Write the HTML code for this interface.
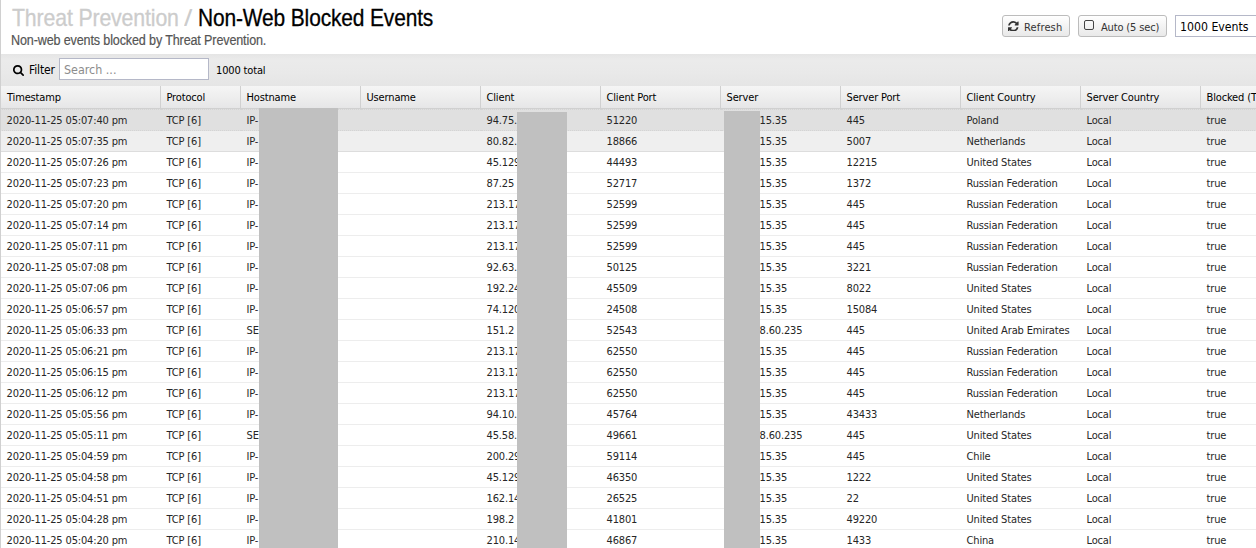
<!DOCTYPE html>
<html><head><meta charset="utf-8"><title>Non-Web Blocked Events</title>
<style>
html,body{margin:0;padding:0;background:#fff;}
body{width:1256px;height:548px;overflow:hidden;position:relative;font-family:"DejaVu Sans Condensed","Liberation Sans",sans-serif;font-size:11px;letter-spacing:-0.15px;color:#000;}
#left{position:absolute;left:0;top:0;width:1px;height:548px;background:#d0d0d0;z-index:5;}
#hdr{position:absolute;left:1px;top:0;width:1255px;height:54px;background:#fff;}
#title span{position:absolute;top:3px;font-family:"Liberation Sans",sans-serif;font-size:24px;line-height:30px;white-space:nowrap;transform-origin:0 0;color:#000;}
#title span{-webkit-text-stroke:0.3px #000;}#title .g{color:#ccc;-webkit-text-stroke:0.3px #ccc;}
#sub{position:absolute;left:10px;top:31px;-webkit-text-stroke:0.2px #555;font-family:"Liberation Sans",sans-serif;font-size:14px;line-height:18px;white-space:nowrap;transform-origin:0 0;transform:scaleX(.898);color:#555;}
.btn{position:absolute;top:15px;height:20px;border:1px solid #bcbcbc;border-radius:3px;background:linear-gradient(#fff,#f3f3f3 50%,#e9e9e9);font-size:11px;line-height:20px;white-space:nowrap;color:#333;box-sizing:content-box;}
#tb{position:absolute;left:1px;top:54px;width:1255px;height:32px;background:linear-gradient(#e5e5e5,#ebebeb 20%,#e9e9e9 60%,#e5e5e5);box-sizing:border-box;}
#tb .ic{position:absolute;left:12px;top:11px;}
#tb .lbl{position:absolute;left:28px;top:9px;font-size:12px;line-height:15px;}
#search{position:absolute;left:58px;top:4px;width:150px;height:22px;box-sizing:border-box;border:1px solid #b5b8c8;background:#fff;font-size:12.4px;letter-spacing:0;line-height:22px;padding-left:4px;color:#8c8c8c;}
#tb .tot{position:absolute;left:215px;top:10px;font-size:11px;line-height:14px;}
table{position:absolute;left:0;top:86px;border-collapse:separate;border-spacing:0;table-layout:fixed;width:1400px;}
th{height:23px;box-sizing:border-box;padding:0 0 0 5.5px;text-align:left;font-weight:normal;font-size:11px;background:linear-gradient(#f5f5f5,#eeeeee 50%,#e6e6e7);border-right:1px solid #d0d0d0;border-bottom:1px solid #d0d0d0;white-space:nowrap;overflow:hidden;}
td{height:21px;box-sizing:border-box;padding:0 0 0 5.5px;font-size:11px;border-bottom:1px solid #ededed;white-space:nowrap;overflow:hidden;color:#262626;}
tr.sel td{height:22px;background:#e0e0e0;border-top:1px dotted #d4d4d4;border-bottom:1px dotted #d4d4d4;}
tr.hov td{background:#efefef;border-bottom:1px solid #ddd;}
td.srv{padding-left:38.5px;}td:first-child{padding-left:6.5px;}
.red{position:absolute;background:#c0c0c0;z-index:3;}
</style></head><body>
<div id="left"></div>
<div id="hdr">
<div id="title"><span class="g" style="left:11px;transform:scaleX(.886)">Threat Prevention</span><span class="g" style="left:182.5px;transform:scaleX(1.25);-webkit-text-stroke:0">/</span><span style="left:197px;transform:scaleX(.872)">Non-Web Blocked Events</span></div>
<div id="sub">Non-web events blocked by Threat Prevention.</div>
<div class="btn" style="left:1001px;width:66px;"><svg width="10.6" height="10.6" viewBox="0 0 1536 1536" style="position:absolute;left:5px;top:4.6px"><path fill="#333" d="M1511 928q0 5-1 7-64 268-268 434.500T764 1536q-146 0-282.500-55T238 1324l-129 129q-19 19-45 19t-45-19-19-45V960q0-26 19-45t45-19h448q26 0 45 19t19 45-19 45l-137 137q71 66 161 102t187 36q134 0 250-65t186-179q11-17 53-117 8-23 30-23h192q13 0 22.500 9.500t9.500 22.500zm25-800v448q0 26-19 45t-45 19h-448q-26 0-45-19t-19-45 19-45l138-138Q969 256 768 256q-134 0-250 65T332 500q-11 17-53 117-8 23-30 23H50q-13 0-22.500-9.500T18 608v-7q65-268 270-434.500T768 0q146 0 284 55.500T1297 212l130-129q19-19 45-19t45 19 19 45z"/></svg><span style="position:absolute;left:21px;top:2px;letter-spacing:0.15px;">Refresh</span></div>
<div class="btn" style="left:1077px;width:87px;"><span style="position:absolute;left:5px;top:4px;width:8px;height:8px;border:1px solid #444;border-radius:2px;"></span><span style="position:absolute;left:22px;top:2px;">Auto (5 sec)</span></div>
<div style="position:absolute;left:1174px;top:15px;width:90px;height:22px;border:1px solid #b5b8c8;box-sizing:border-box;font-size:12.2px;letter-spacing:0;line-height:22px;padding-left:4px;background:#fff;">1000 Events</div>
</div>
<div id="tb">
<svg class="ic" width="11" height="11" viewBox="0 0 1664 1664"><path fill="#000" d="M1152 704q0-185-131.500-316.500T704 256 387.500 387.500 256 704t131.500 316.500T704 1152t316.500-131.500T1152 704zm512 832q0 52-38 90t-90 38q-54 0-90-38l-343-342q-179 124-399 124-143 0-273.500-55.500t-225-150-150-225T0 704t55.500-273.500 150-225 225-150T704 0t273.500 55.500 225 150 150 225T1408 704q0 220-124 399l343 343q37 37 37 90z"/></svg>
<span class="lbl">Filter</span>
<div id="search">Search ...</div>
<span class="tot">1000 total</span>
</div>
<table>
<colgroup><col style="width:161px"><col style="width:80px"><col style="width:120px"><col style="width:120px"><col style="width:120px"><col style="width:120px"><col style="width:120px"><col style="width:120px"><col style="width:120px"><col style="width:120px"><col style="width:120px"><col></colgroup>
<thead><tr><th style="padding-left:7px">Timestamp</th><th>Protocol</th><th>Hostname</th><th>Username</th><th>Client</th><th>Client Port</th><th>Server</th><th>Server Port</th><th>Client Country</th><th>Server Country</th><th>Blocked (Threat Prevention)</th><th></th></tr></thead>
<tbody>
<tr class="sel"><td>2020-11-25 05:07:40 pm</td><td>TCP [6]</td><td>IP-</td><td></td><td>94.75.</td><td>51220</td><td class="srv">15.35</td><td>445</td><td>Poland</td><td>Local</td><td>true</td></tr>
<tr class="hov"><td>2020-11-25 05:07:35 pm</td><td>TCP [6]</td><td>IP-</td><td></td><td>80.82.</td><td>18866</td><td class="srv">15.35</td><td>5007</td><td>Netherlands</td><td>Local</td><td>true</td></tr>
<tr><td>2020-11-25 05:07:26 pm</td><td>TCP [6]</td><td>IP-</td><td></td><td>45.129</td><td>44493</td><td class="srv">15.35</td><td>12215</td><td>United States</td><td>Local</td><td>true</td></tr>
<tr><td>2020-11-25 05:07:23 pm</td><td>TCP [6]</td><td>IP-</td><td></td><td>87.25</td><td>52717</td><td class="srv">15.35</td><td>1372</td><td>Russian Federation</td><td>Local</td><td>true</td></tr>
<tr><td>2020-11-25 05:07:20 pm</td><td>TCP [6]</td><td>IP-</td><td></td><td>213.17</td><td>52599</td><td class="srv">15.35</td><td>445</td><td>Russian Federation</td><td>Local</td><td>true</td></tr>
<tr><td>2020-11-25 05:07:14 pm</td><td>TCP [6]</td><td>IP-</td><td></td><td>213.17</td><td>52599</td><td class="srv">15.35</td><td>445</td><td>Russian Federation</td><td>Local</td><td>true</td></tr>
<tr><td>2020-11-25 05:07:11 pm</td><td>TCP [6]</td><td>IP-</td><td></td><td>213.17</td><td>52599</td><td class="srv">15.35</td><td>445</td><td>Russian Federation</td><td>Local</td><td>true</td></tr>
<tr><td>2020-11-25 05:07:08 pm</td><td>TCP [6]</td><td>IP-</td><td></td><td>92.63.</td><td>50125</td><td class="srv">15.35</td><td>3221</td><td>Russian Federation</td><td>Local</td><td>true</td></tr>
<tr><td>2020-11-25 05:07:06 pm</td><td>TCP [6]</td><td>IP-</td><td></td><td>192.24</td><td>45509</td><td class="srv">15.35</td><td>8022</td><td>United States</td><td>Local</td><td>true</td></tr>
<tr><td>2020-11-25 05:06:57 pm</td><td>TCP [6]</td><td>IP-</td><td></td><td>74.120</td><td>24508</td><td class="srv">15.35</td><td>15084</td><td>United States</td><td>Local</td><td>true</td></tr>
<tr><td>2020-11-25 05:06:33 pm</td><td>TCP [6]</td><td>SE</td><td></td><td>151.2</td><td>52543</td><td class="srv">8.60.235</td><td>445</td><td>United Arab Emirates</td><td>Local</td><td>true</td></tr>
<tr><td>2020-11-25 05:06:21 pm</td><td>TCP [6]</td><td>IP-</td><td></td><td>213.17</td><td>62550</td><td class="srv">15.35</td><td>445</td><td>Russian Federation</td><td>Local</td><td>true</td></tr>
<tr><td>2020-11-25 05:06:15 pm</td><td>TCP [6]</td><td>IP-</td><td></td><td>213.17</td><td>62550</td><td class="srv">15.35</td><td>445</td><td>Russian Federation</td><td>Local</td><td>true</td></tr>
<tr><td>2020-11-25 05:06:12 pm</td><td>TCP [6]</td><td>IP-</td><td></td><td>213.17</td><td>62550</td><td class="srv">15.35</td><td>445</td><td>Russian Federation</td><td>Local</td><td>true</td></tr>
<tr><td>2020-11-25 05:05:56 pm</td><td>TCP [6]</td><td>IP-</td><td></td><td>94.10.</td><td>45764</td><td class="srv">15.35</td><td>43433</td><td>Netherlands</td><td>Local</td><td>true</td></tr>
<tr><td>2020-11-25 05:05:11 pm</td><td>TCP [6]</td><td>SE</td><td></td><td>45.58.</td><td>49661</td><td class="srv">8.60.235</td><td>445</td><td>United States</td><td>Local</td><td>true</td></tr>
<tr><td>2020-11-25 05:04:59 pm</td><td>TCP [6]</td><td>IP-</td><td></td><td>200.29</td><td>59114</td><td class="srv">15.35</td><td>445</td><td>Chile</td><td>Local</td><td>true</td></tr>
<tr><td>2020-11-25 05:04:58 pm</td><td>TCP [6]</td><td>IP-</td><td></td><td>45.129</td><td>46350</td><td class="srv">15.35</td><td>1222</td><td>United States</td><td>Local</td><td>true</td></tr>
<tr><td>2020-11-25 05:04:51 pm</td><td>TCP [6]</td><td>IP-</td><td></td><td>162.14</td><td>26525</td><td class="srv">15.35</td><td>22</td><td>United States</td><td>Local</td><td>true</td></tr>
<tr><td>2020-11-25 05:04:28 pm</td><td>TCP [6]</td><td>IP-</td><td></td><td>198.2</td><td>41801</td><td class="srv">15.35</td><td>49220</td><td>United States</td><td>Local</td><td>true</td></tr>
<tr><td>2020-11-25 05:04:20 pm</td><td>TCP [6]</td><td>IP-</td><td></td><td>210.14</td><td>46867</td><td class="srv">15.35</td><td>1433</td><td>China</td><td>Local</td><td>true</td></tr>
</tbody></table>
<div class="red" style="left:259.3px;top:108px;width:78.3px;height:440px;"></div>
<div class="red" style="left:516.6px;top:112px;width:50.2px;height:436px;"></div>
<div class="red" style="left:724.4px;top:111px;width:36px;height:437px;"></div>
</body></html>
